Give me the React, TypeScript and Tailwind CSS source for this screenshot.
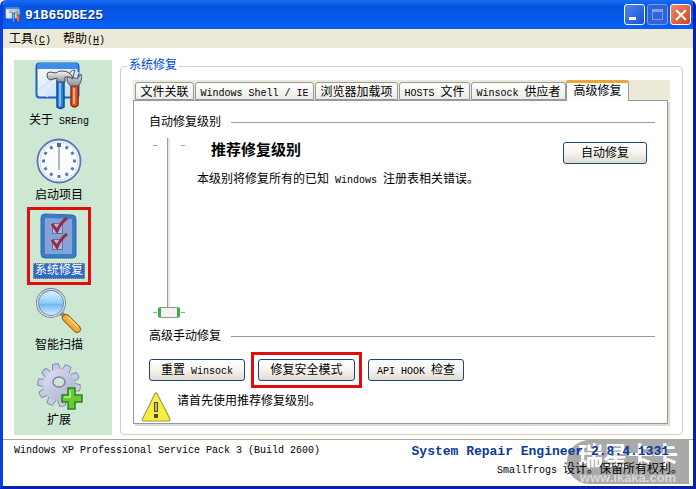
import { useState } from "react";
import type { ReactNode } from "react";

const Lat = ({ children }: { children: ReactNode }) => (
  <span className="whitespace-pre text-[10px]">{children}</span>
);

function ToolsIcon({ className }: { className: string }) {
  return (
    <svg viewBox="0 0 48 48" className={className} aria-hidden="true">
      <defs>
        <linearGradient id="win" x1="0" y1="0" x2="1" y2="1">
          <stop offset="0" stopColor="#fff" />
          <stop offset="1" stopColor="#b9d9f7" />
        </linearGradient>
        <linearGradient id="steel" x1="0" y1="0" x2="0" y2="1">
          <stop offset="0" stopColor="#fafafa" />
          <stop offset="1" stopColor="#8e8e92" />
        </linearGradient>
      </defs>
      <rect x="1.500" y="1.500" width="42" height="34" rx="3" fill="url(#win)" stroke="#1f5fc4" strokeWidth="2" />
      <path d="M2 7V4q0-3 3-3h35q3 0 3 3v3z" fill="#3d8bea" />
      <path d="M3 30Q14 16 28 16T43 10M12 35Q14 22 26 20" stroke="#d5e6fa" strokeWidth="2" fill="none" />
      <path d="M22 19h7v26q-3.500 3-7 0z" fill="#2f80dc" stroke="#124a97" strokeWidth="1.500" />
      <path d="M25 21v23" stroke="#83c0ff" strokeWidth="2" />
      <path d="M36 24h7v19q-3.500 4-7 0z" fill="#f4521b" stroke="#8f2a12" strokeWidth="1.500" />
      <path d="M39 26v16" stroke="#ffb38c" strokeWidth="2" />
      <path d="M33 14q-3 6 3 10h7q5-5 3-12l-4 5-4-2 2-7q-5 0-7 6z" fill="url(#steel)" stroke="#55565c" />
      <path d="M12 13q0-3 3-3l6 1q2-2 6-2 9 0 11 8-4-3-8-2v5h-8v-4l-3 1-4 1q-3-1-3-5z" fill="url(#steel)" stroke="#4b4c52" />
    </svg>
  );
}

function ClockIcon() {
  return (
    <svg viewBox="0 0 48 48" className="size-12" aria-hidden="true">
      <circle cx="24" cy="24" r="21.500" fill="#fff" stroke="#5578b8" strokeWidth="1.800" />
      <circle cx="24" cy="24" r="19" fill="#fafcff" stroke="#7d97cb" strokeWidth="1" strokeDasharray="0.800 1.190" />
      {Array.from({ length: 12 }, (_, i) => (
        <rect key={i} x="22.500" y="7" width="3" height="3" fill="#5b7abd" transform={`rotate(${i * 30} 24 24)`} />
      ))}
      <rect x="22" y="6" width="4" height="4" fill="#4066b4" />
      <path d="M24 8v25" stroke="#707478" strokeWidth="1" />
    </svg>
  );
}

function ChecklistIcon() {
  return (
    <svg viewBox="0 0 48 48" className="size-12" aria-hidden="true">
      <path d="M10 2l27 1q4 0 4 4v36q0 3-4 3L10 46q-4 0-4-4V6q0-4 4-4z" fill="#3b7cc6" stroke="#2c69ae" />
      <path d="M10 6l27 1v35l-27 0z" fill="#86a3d5" />
      <rect x="17.500" y="11.500" width="10" height="10" fill="#a5bbe0" stroke="#5873a8" />
      <rect x="17.500" y="27.500" width="10" height="10" fill="#a5bbe0" stroke="#5873a8" />
      <path d="M17 12l5 7q4-9 10-13M17 28l5 7q4-9 10-13" stroke="#a12643" strokeWidth="3" fill="none" />
    </svg>
  );
}

function MagnifierIcon() {
  return (
    <svg viewBox="0 0 48 48" className="size-12" aria-hidden="true">
      <defs>
        <linearGradient id="lens" x1="0" y1="0" x2="0" y2="1">
          <stop offset="0" stopColor="#e9f6ff" />
          <stop offset="0.500" stopColor="#8ccdfa" />
          <stop offset="0.550" stopColor="#6db9f3" />
          <stop offset="1" stopColor="#dff5ff" />
        </linearGradient>
      </defs>
      <path d="M26 26l6 6" stroke="#85888f" strokeWidth="4" />
      <path d="M31 31l11 11" stroke="#8c6020" strokeWidth="8" strokeLinecap="round" />
      <path d="M31 31l11 11" stroke="#f2ae39" strokeWidth="6" strokeLinecap="round" />
      <path d="M33 30l10 10" stroke="#ffe08c" strokeWidth="1.500" />
      <circle cx="16" cy="16" r="13.500" fill="url(#lens)" stroke="#73839b" strokeWidth="3" />
      <circle cx="16" cy="16" r="13.500" fill="none" stroke="#d9e1ec" strokeWidth="1.200" />
    </svg>
  );
}

function GearIcon() {
  return (
    <svg viewBox="0 0 48 48" className="size-12" aria-hidden="true">
      <defs>
        <linearGradient id="gear" x1="0" y1="0" x2="1" y2="1">
          <stop offset="0" stopColor="#dfe1f2" />
          <stop offset="1" stopColor="#a9accf" />
        </linearGradient>
      </defs>
      <g fill="#c9cbe3" stroke="#8589a9">
        {Array.from({ length: 10 }, (_, i) => (
          <path key={i} d="M20 8l1-6q3-1 6 0l1 6z" transform={`rotate(${i * 36 - 10} 24 23)`} />
        ))}
      </g>
      <circle cx="24" cy="23" r="16" fill="url(#gear)" />
      <ellipse cx="24" cy="20" rx="6" ry="5" fill="#cde8d2" stroke="#7e829f" strokeWidth="1.500" />
      <path d="M33 26h7v7h7v7h-7v7h-7v-7h-6v-7h6z" fill="#68cb35" stroke="#28841b" strokeWidth="1.500" />
      <path d="M35 28v7h-6" stroke="#b8f08c" strokeWidth="1.500" fill="none" />
    </svg>
  );
}

function WarningIcon() {
  return (
    <svg viewBox="0 0 30 30" className="size-[30px]" aria-hidden="true">
      <path d="M14 1.500q1-1 2 0L29 27q0 2-2 2H3Q.5 29 1.500 27z" fill="#f6ee45" stroke="#a39c4a" strokeWidth="1.200" />
      <path d="M13 10h4v10h-4zM13 22h4v4h-4z" fill="#4a4a38" />
      <path d="M14 11h2v8h-2z" fill="#bdb87a" />
    </svg>
  );
}

const navItems = [
  { id: "about", label: <>关于<Lat> SREng</Lat></>, icon: <ToolsIcon className="size-12" /> },
  { id: "startup", label: "启动项目", icon: <ClockIcon /> },
  { id: "repair", label: "系统修复", icon: <ChecklistIcon /> },
  { id: "scan", label: "智能扫描", icon: <MagnifierIcon /> },
  { id: "extend", label: "扩展", icon: <GearIcon /> },
];

const tabs = [
  { id: "assoc", label: <>文件关联</>, width: "w-[59px]" },
  { id: "shell", label: <Lat>Windows Shell / IE</Lat>, width: "w-[119px]" },
  { id: "addons", label: <>浏览器加载项</>, width: "w-[83px]" },
  { id: "hosts", label: <><Lat>HOSTS </Lat>文件</>, width: "w-[71px]" },
  { id: "winsock", label: <><Lat>Winsock </Lat>供应者</>, width: "w-[95px]" },
];

function XpButton({ children, className }: { children: ReactNode; className: string }) {
  return (
    <button
      type="button"
      className={`h-[22px] rounded-[3px] border border-[#1c4474] bg-linear-to-b from-white via-[#f5f4ef] to-[#dedacf] pt-0.5 text-center leading-4 ${className}`}
    >
      {children}
    </button>
  );
}

function SectionTitle({ children }: { children: ReactNode }) {
  return (
    <h2 className="flex h-4 items-center gap-2.5 leading-4">
      <span className="pt-0.5">{children}</span>
      <span className="h-px flex-1 bg-[#9c9c8e]" />
    </h2>
  );
}

export default function App() {
  const [level, setLevel] = useState(1);
  return (
    <div className="overflow-hidden rounded-t-md border-x-[3px] border-b-[3px] border-[#0a3fd8] border-r-[#0420b0] border-b-[#0420b0] bg-white font-['Liberation_Mono','Noto_Sans_CJK_SC',monospace] text-xs text-black">
      <header className="flex h-[29px] items-center gap-1 bg-linear-to-b from-[#1a6cf4] via-[#0553e0] via-25% to-[#0560f8] pr-0.5 pl-0.5">
        <ToolsIcon className="size-4" />
        <h1 className="flex-1 pt-0.5 text-[13px] font-bold text-white [text-shadow:1px_1px_#0a2d84]">91B65DBE25</h1>
        <div className="flex gap-0.5">
          <button type="button" aria-label="最小化" className="flex size-[21px] rounded-[3px] border border-white bg-linear-to-br from-[#4d86f0] to-[#1c4fd6]">
            <span className="mt-3 ml-1 h-[3px] w-[7px] bg-white" />
          </button>
          <button type="button" aria-label="最大化" disabled className="flex size-[21px] items-center justify-center rounded-[3px] border border-[#7ba0ee] bg-[#2f63dc]">
            <span className="size-[11px] border border-t-[3px] border-[#7f9fec]" />
          </button>
          <button type="button" aria-label="关闭" className="flex size-[21px] items-center justify-center rounded-[3px] border border-white bg-linear-to-br from-[#ee8a68] to-[#d03f18]">
            <svg viewBox="0 0 12 12" className="size-3" aria-hidden="true">
              <path d="M1 1l10 10M11 1L1 11" stroke="#fff" strokeWidth="2" />
            </svg>
          </button>
        </div>
      </header>

      <nav className="flex h-[19px] items-center gap-3 bg-[#ece9d8] pt-0.5 pl-1.5">
        <button type="button">工具<Lat>(<u>C</u>)</Lat></button>
        <button type="button">帮助<Lat>(<u>H</u>)</Lat></button>
      </nav>

      <div className="flex h-[391px] gap-2 pt-3 pr-2.5 pb-1 pl-[11px]">
        <aside className="flex w-[98px] shrink-0 flex-col items-center gap-[3px] bg-[#cde8d2] pr-2">
          {navItems.map((item) => {
            const active = item.id === "repair";
            return (
              <button
                key={item.id}
                type="button"
                className={`flex h-[72px] w-[58px] shrink-0 flex-col items-center gap-[3px] pt-0.5 ${active ? "outline-3 outline-[#e00d0d]" : ""}`}
              >
                {item.icon}
                <span className={`h-4 px-0.5 leading-4 whitespace-nowrap ${active ? "bg-[#316ac5] text-white outline-1 -outline-offset-1 outline-dotted outline-[#c8a060]" : ""}`}>
                  {item.label}
                </span>
              </button>
            );
          })}
        </aside>

        <fieldset className="min-w-0 flex-1 rounded-[4px] border border-[#d0d0bf] px-3">
          <legend className="-ml-1.5 h-3 px-0.5 leading-3 text-[#0046d5]">系统修复</legend>
          <div className="flex h-full flex-col pt-2 pb-2.5">
            <div role="tablist" className="flex h-5 shrink-0 items-end bg-[#ece9d8] pl-0.5">
              {tabs.map((tab) => (
                <button
                  key={tab.id}
                  type="button"
                  role="tab"
                  aria-selected={false}
                  className={`mr-px h-[18px] shrink-0 rounded-t-[3px] border border-[#919b9c] bg-linear-to-b from-white to-[#ecebe6] pt-1 leading-3 whitespace-nowrap ${tab.width}`}
                >
                  {tab.label}
                </button>
              ))}
              <button
                type="button"
                role="tab"
                aria-selected
                className="-mb-px -ml-px h-[21px] w-[63px] shrink-0 rounded-t-[3px] border-x border-t-3 border-x-[#919b9c] border-t-[#eda62f] bg-[#fcfcfe] leading-4"
              >
                高级修复
              </button>
            </div>

            <div role="tabpanel" className="mr-0.5 flex-1 border border-t-0 border-[#919b9c] bg-[linear-gradient(#919b9c,#919b9c),linear-gradient(#919b9c,#919b9c)] bg-[length:432px_1px,calc(100%_-_494px)_1px] bg-[position:left_top,right_top] bg-no-repeat pt-3.5 pr-3 pl-[15px] shadow-[2px_2px_0_#dedccf]">
              <SectionTitle>自动修复级别</SectionTitle>
              <div className="mt-2 flex h-[182px]">
                <div className="ml-1 flex h-full w-8 shrink-0 justify-center bg-[linear-gradient(to_right,#a0a090_4px,transparent_4px,transparent_28px,#a0a090_28px),linear-gradient(to_right,#a0a090_4px,transparent_4px,transparent_28px,#a0a090_28px)] bg-[length:100%_1px] bg-[position:0_7px,0_174px] bg-no-repeat">
                  <input
                    type="range"
                    aria-label="自动修复级别"
                    min={0}
                    max={1}
                    value={level}
                    onChange={(e) => setLevel(Number(e.target.value))}
                    className="h-[180px] w-[22px] appearance-none bg-[linear-gradient(to_right,transparent_9px,#9d9c99_9px,#9d9c99_10px,#e8e6df_10px,#e8e6df_12px,transparent_12px)] [writing-mode:vertical-lr] [&::-webkit-slider-thumb]:h-[11px] [&::-webkit-slider-thumb]:w-[22px] [&::-webkit-slider-thumb]:appearance-none [&::-webkit-slider-thumb]:rounded-[2px] [&::-webkit-slider-thumb]:border [&::-webkit-slider-thumb]:border-r-3 [&::-webkit-slider-thumb]:border-l-3 [&::-webkit-slider-thumb]:border-[#8a9a8a] [&::-webkit-slider-thumb]:border-r-[#35b04a] [&::-webkit-slider-thumb]:border-l-[#35b04a] [&::-webkit-slider-thumb]:bg-[#f3f2ee]"
                  />
                </div>
                <div className="ml-3 min-w-0 flex-1 pt-0.5">
                  <h3 className="pl-3.5 text-[15px] leading-6 font-bold">推荐修复级别</h3>
                  <p className="mt-1.5 leading-5">本级别将修复所有的已知<Lat> Windows </Lat>注册表相关错误。</p>
                </div>
                <XpButton className="mt-1 mr-2 w-[84px] shrink-0">自动修复</XpButton>
              </div>

              <div className="mt-2">
                <SectionTitle>高级手动修复</SectionTitle>
              </div>
              <div className="mt-2 flex items-center gap-1.5">
                <XpButton className="w-24">重置<Lat> Winsock</Lat></XpButton>
                <div className="flex h-9 items-center border-3 border-[#e00d0d] px-1">
                  <XpButton className="w-[97px]">修复安全模式</XpButton>
                </div>
                <XpButton className="w-24"><Lat>API HOOK </Lat>检查</XpButton>
              </div>
              <div className="-ml-2 flex items-start gap-1.5 pt-1">
                <WarningIcon />
                <p className="leading-5">请首先使用推荐修复级别。</p>
              </div>
            </div>
          </div>
        </fieldset>
      </div>

      <footer className="relative flex h-[47px] justify-between border-t border-[#aca899] pl-[11px]">
        <p className="leading-5">
          <Lat>Windows XP Professional Service Pack 3 (Build 2600)</Lat>
        </p>
        <div aria-hidden="true" className="absolute top-0 right-1 flex h-11 w-[122px] flex-col items-center rounded-l-[22px] bg-[#a9a9a9] font-['Liberation_Sans','Noto_Sans_CJK_SC',sans-serif] font-bold text-white">
          <span className="text-[25px] leading-8">瑞星卡卡</span>
          <span className="text-[13px] leading-3 text-[#d8d8d8]">www.ikaka.com</span>
        </div>
        <div className="relative pt-1 pr-2.5 text-right">
          <p className="pr-3.5 text-[13px] leading-4 font-bold text-[#0a3a9c]">System Repair Engineer 2.8.4.1331</p>
          <p className="leading-5"><Lat>Smallfrogs </Lat>设计。保留所有权利。</p>
        </div>
      </footer>
    </div>
  );
}
